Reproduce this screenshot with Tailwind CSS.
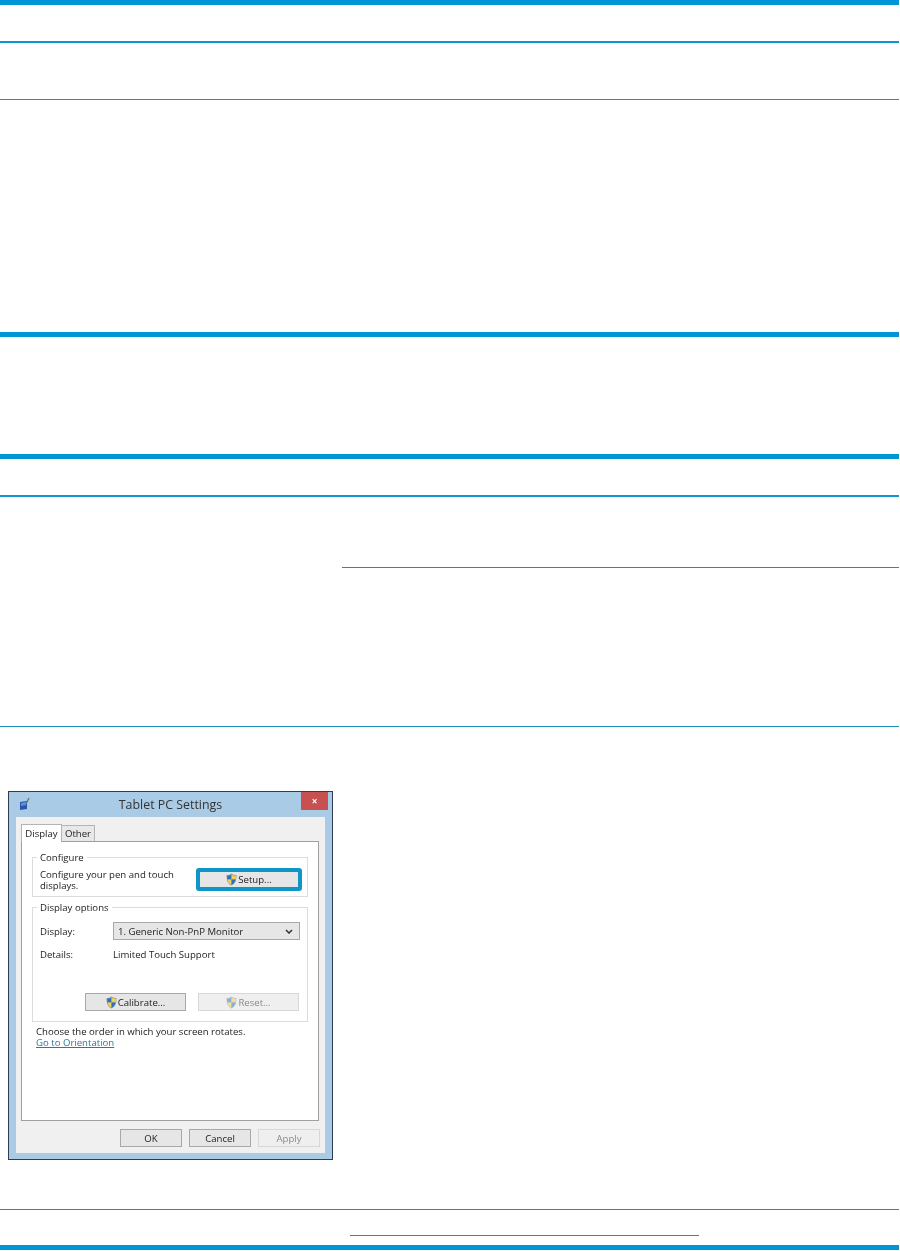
<!DOCTYPE html>
<html lang="en">
  <head>
    <meta charset="UTF-8" />
    <meta name="viewport" content="width=device-width, initial-scale=1.0" />
    <title>Tablet PC Settings</title>
    <script src="https://cdn.jsdelivr.net/npm/@tailwindcss/browser@4"></script>
  </head>
  <body class="bg-white">
    <main class="flex h-[1251px] w-[899px] flex-col overflow-hidden">
      <div class="h-[5px] shrink-0 bg-[#0096d6]"></div>
      <div class="h-[36px] shrink-0"></div>
      <div class="h-[2px] shrink-0 bg-[#0f96d2]"></div>
      <div class="h-[56px] shrink-0"></div>
      <div class="h-px shrink-0 bg-[#1a8fc0]"></div>
      <div class="h-[232px] shrink-0"></div>
      <div class="h-[5px] shrink-0 bg-[#0096d6]"></div>
      <div class="h-[117px] shrink-0"></div>
      <div class="h-[5px] shrink-0 bg-[#0096d6]"></div>
      <div class="h-[36px] shrink-0"></div>
      <div class="h-[2px] shrink-0 bg-[#0f96d2]"></div>
      <div class="h-[70px] shrink-0"></div>
      <div class="ml-[342px] h-px shrink-0 bg-[#1a8fc0]"></div>
      <div class="h-[158px] shrink-0"></div>
      <div class="h-px shrink-0 bg-[#1a8fc0]"></div>
      <div class="h-[64px] shrink-0"></div>

      <!-- Tablet PC Settings dialog -->
      <section class="ml-[8px] h-[369px] w-[325px] shrink-0 border border-[#2c3e50] bg-[#a9cbe6] font-['Open_Sans',sans-serif] text-[9.6px] leading-[11px] text-[#222] blur-[0.4px]">
        <header class="relative flex h-[25px] items-center justify-center">
          <svg class="absolute left-[10px] top-[5px] h-[14px] w-[11px]" viewBox="0 0 11 14">
            <path d="M1 5l7-1v8l-7 1z" fill="#2b55a8" />
            <path d="M2 6l5-1v3l-5 1z" fill="#5d8fe0" />
            <path d="M7 7l3-6" stroke="#6b7280" stroke-width="1.400" />
          </svg>
          <h1 class="pt-[2px] text-[12.4px] leading-none text-[#333]">Tablet PC Settings</h1>
          <button class="absolute right-[4px] top-0 flex h-[18px] w-[27px] items-center justify-center bg-[#c75050] text-[10px] font-bold text-white">×</button>
        </header>

        <div class="mx-[7px] h-[336px] bg-[#f0f0f0] pl-[5px] pt-[6px]">
          <div class="flex h-[18px] items-end">
            <div class="relative top-px z-10 flex h-[18px] w-[41px] items-center justify-center border border-b-0 border-[#b4b4b4] bg-white">Display</div>
            <div class="flex h-[16px] w-[33px] items-center justify-center border border-b-0 border-l-0 border-[#b4b4b4] bg-[#e8e8e8]">Other</div>
          </div>

          <div class="h-[280px] w-[298px] border border-[#a0a0a0] bg-white pl-[10px] pt-[15px]">
            <fieldset class="relative flex h-[40px] w-[276px] items-center justify-between border border-[#dcdcdc] pl-[7px] pr-[5px] pt-[5px]">
              <span class="absolute -top-[6px] left-[4px] bg-white px-[3px]">Configure</span>
              <div>
                <p>Configure your pen and touch</p>
                <p>displays.</p>
              </div>
              <div class="flex h-[23px] w-[106px] items-center justify-center gap-px rounded-[3px] border-[4px] border-[#0f96c8] bg-[#e6e6e6]">
                <svg class="h-[13px] w-[11px]" viewBox="0 0 11 13">
                  <path d="M5.5 0.5C4 1.5 2.5 2 0.5 2c0 5 1 8.500 5 10.500 4-2 5-5.500 5-10.500-2 0-3.500-.5-5-1.500z" fill="#8a9aa8" />
                  <path d="M5.500 1.500v5h-4c-.2-1-.2-2.500-.2-3.700 1.600-.1 3-.5 4.200-1.300z" fill="#2f6fc0" />
                  <path d="M5.500 1.500v5h4.200c.2-1 .2-2.500.2-3.700-1.600-.1-3.200-.5-4.400-1.300z" fill="#f2d24a" />
                  <path d="M1.500 6.500h4v5.200c-2.500-1.300-3.500-3-4-5.200z" fill="#f2d24a" />
                  <path d="M9.700 6.500h-4.200v5.200c2.500-1.300 3.700-3 4.200-5.200z" fill="#2f6fc0" />
                </svg>
                <span>Setup...</span>
              </div>
            </fieldset>

            <fieldset class="relative mt-[10px] h-[115px] w-[276px] border border-[#dcdcdc] pl-[7px] pt-[14px]">
              <span class="absolute -top-[6px] left-[4px] bg-white px-[3px]">Display options</span>
              <div class="flex items-center">
                <span class="w-[73px]">Display:</span>
                <div class="flex h-[18px] w-[187px] items-center justify-between border border-[#a8a8a8] bg-[#e6e6e6] px-[4px]">
                  <span>1. Generic Non-PnP Monitor</span>
                  <svg class="mr-[2px] h-[5px] w-[8px]" viewBox="0 0 8 5" fill="none" stroke="#333" stroke-width="1.500"><path d="M1 1l3 3 3-3" /></svg>
                </div>
              </div>
              <div class="mt-[9px] flex">
                <span class="w-[73px]">Details:</span>
                <span>Limited Touch Support</span>
              </div>
              <div class="ml-[45px] mt-[33px] flex gap-[12px]">
                <div class="flex h-[18px] w-[101px] items-center justify-center gap-px border border-[#a8a8a8] bg-[#e6e6e6]">
                  <svg class="h-[13px] w-[11px]" viewBox="0 0 11 13">
                    <path d="M5.5 0.5C4 1.5 2.5 2 0.5 2c0 5 1 8.500 5 10.500 4-2 5-5.500 5-10.500-2 0-3.500-.5-5-1.500z" fill="#8a9aa8" />
                    <path d="M5.500 1.500v5h-4c-.2-1-.2-2.500-.2-3.700 1.600-.1 3-.5 4.200-1.300z" fill="#2f6fc0" />
                    <path d="M5.500 1.500v5h4.200c.2-1 .2-2.500.2-3.700-1.600-.1-3.200-.5-4.400-1.300z" fill="#f2d24a" />
                    <path d="M1.500 6.500h4v5.200c-2.500-1.300-3.500-3-4-5.200z" fill="#f2d24a" />
                    <path d="M9.700 6.500h-4.200v5.200c2.500-1.300 3.700-3 4.200-5.200z" fill="#2f6fc0" />
                  </svg>
                  <span>Calibrate...</span>
                </div>
                <div class="flex h-[18px] w-[101px] items-center justify-center gap-px border border-[#d8d8d8] bg-[#efefef] text-[#8a8a8a]">
                  <svg class="h-[13px] w-[11px] opacity-50" viewBox="0 0 11 13">
                    <path d="M5.5 0.5C4 1.5 2.5 2 0.5 2c0 5 1 8.500 5 10.500 4-2 5-5.500 5-10.500-2 0-3.500-.5-5-1.500z" fill="#8a9aa8" />
                    <path d="M5.500 1.500v5h-4c-.2-1-.2-2.500-.2-3.700 1.600-.1 3-.5 4.200-1.300z" fill="#2f6fc0" />
                    <path d="M5.500 1.500v5h4.200c.2-1 .2-2.500.2-3.700-1.600-.1-3.200-.5-4.400-1.300z" fill="#f2d24a" />
                    <path d="M1.500 6.500h4v5.200c-2.500-1.300-3.500-3-4-5.200z" fill="#f2d24a" />
                    <path d="M9.700 6.500h-4.200v5.200c2.500-1.300 3.700-3 4.200-5.200z" fill="#2f6fc0" />
                  </svg>
                  <span>Reset...</span>
                </div>
              </div>
            </fieldset>

            <p class="ml-[4px] mt-[4px]">Choose the order in which your screen rotates.</p>
            <a href="#" class="ml-[4px] block w-fit text-[#2a7a9a] underline">Go to Orientation</a>
          </div>

          <div class="ml-[99px] mt-[8px] flex gap-[7px]">
            <div class="flex h-[18px] w-[62px] items-center justify-center border border-[#a8a8a8] bg-[#e6e6e6]">OK</div>
            <div class="flex h-[18px] w-[62px] items-center justify-center border border-[#a8a8a8] bg-[#e6e6e6]">Cancel</div>
            <div class="flex h-[18px] w-[62px] items-center justify-center border border-[#d8d8d8] bg-[#efefef] text-[#8a8a8a]">Apply</div>
          </div>
        </div>
      </section>

      <div class="h-[49px] shrink-0"></div>
      <div class="h-px shrink-0 bg-[#1a8fc0]"></div>
      <div class="h-[25px] shrink-0"></div>
      <div class="ml-[350px] h-px w-[349px] shrink-0 bg-[#1a8fc0]"></div>
      <div class="h-[9px] shrink-0"></div>
      <div class="h-[5px] shrink-0 bg-[#0096d6]"></div>
    </main>
  </body>
</html>
